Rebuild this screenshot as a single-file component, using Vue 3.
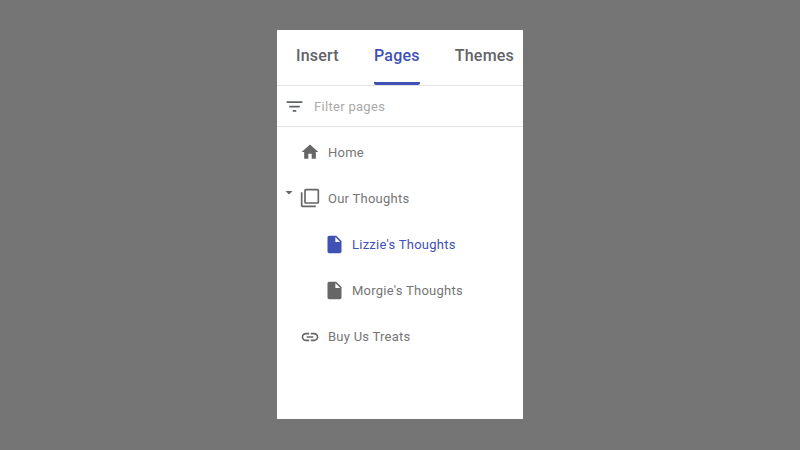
<script setup>
const tabs = [
  { label: 'Insert' },
  { label: 'Pages', active: true },
  { label: 'Themes' }
]

const icons = {
  home: 'M10 20v-6h4v6h5v-8h3L12 3 2 12h3v8z',
  stack:
    'M3 5H1v16c0 1.1.9 2 2 2h16v-2H3V5zm18-4H7c-1.1 0-2 .9-2 2v14c0 1.1.9 2 2 2h14c1.1 0 2-.9 2-2V3c0-1.1-.9-2-2-2zm0 16H7V3h14v14z',
  file: 'M6 2c-1.1 0-1.99.9-1.99 2L4 20c0 1.1.89 2 1.99 2H18c1.1 0 2-.9 2-2V8l-6-6H6zm7 7V3.5L18.5 9H13z',
  link: 'M3.9 12c0-1.71 1.39-3.1 3.1-3.1h4V7H7c-2.76 0-5 2.24-5 5s2.24 5 5 5h4v-1.9H7c-1.71 0-3.1-1.39-3.1-3.1zM8 13h8v-2H8v2zm9-6h-4v1.9h4c1.71 0 3.1 1.39 3.1 3.1s-1.39 3.1-3.1 3.1h-4V17h4c2.76 0 5-2.24 5-5s-2.24-5-5-5z'
}

const pages = [
  { label: 'Home', icon: 'home' },
  { label: 'Our Thoughts', icon: 'stack', open: true },
  { label: "Lizzie's Thoughts", icon: 'file', child: true, active: true },
  { label: "Morgie's Thoughts", icon: 'file', child: true },
  { label: 'Buy Us Treats', icon: 'link' }
]
</script>

<template>
  <main class="stage">
    <section class="panel">
      <nav class="tabs">
        <div v-for="tab in tabs" :key="tab.label" class="tab" :class="{ 'tab--active': tab.active }">
          {{ tab.label }}
        </div>
      </nav>

      <div class="filter">
        <svg class="filter__icon" viewBox="0 0 24 24">
          <path d="M10 18h4v-2h-4v2zM3 6v2h18V6H3zm3 7h12v-2H6v2z" />
        </svg>
        <span>Filter pages</span>
      </div>

      <ul class="tree">
        <li
          v-for="page in pages"
          :key="page.label"
          class="row"
          :class="{ 'row--child': page.child, 'row--active': page.active }"
        >
          <svg v-if="page.open" class="row__caret" viewBox="0 0 24 24">
            <path d="M5 8l7 7 7-7z" />
          </svg>
          <svg class="row__icon" viewBox="0 0 24 24">
            <path :d="icons[page.icon]" />
          </svg>
          <span>{{ page.label }}</span>
        </li>
      </ul>
    </section>
  </main>
</template>

<style>
html,
body {
  margin: 0;
  background: #757575;
}
</style>

<style scoped>
.stage {
  width: 800px;
  height: 450px;
  background: #757575;
  display: flex;
  justify-content: center;
  padding-top: 30px;
  box-sizing: border-box;
  font-family: Roboto, 'Liberation Sans', sans-serif;
}

.panel {
  width: 246px;
  height: 389px;
  background: #fff;
  overflow: hidden;
}

.tabs {
  height: 55px;
  display: flex;
  justify-content: space-between;
  padding: 0 9px 0 19px;
  border-bottom: 1px solid #e3e3e3;
}

.tab {
  height: 52px;
  line-height: 51px;
  font-size: 16px;
  font-weight: 500;
  letter-spacing: 0.2px;
  color: #5f6368;
  border-bottom: 3px solid transparent;
}

.tab--active {
  color: #3f51b5;
  border-bottom-color: #3f51b5;
  border-radius: 0 0 2px 2px;
}

.filter {
  height: 40px;
  display: flex;
  align-items: center;
  gap: 9px;
  padding-left: 7px;
  border-bottom: 1px solid #e3e3e3;
  font-size: 13px;
  letter-spacing: 0.3px;
  color: #aaa;
}

.filter__icon {
  width: 21px;
  height: 21px;
  fill: #5f6368;
}

.tree {
  list-style: none;
  margin: 0;
  padding: 2px 0 0;
}

.row {
  position: relative;
  height: 46.2px;
  display: flex;
  align-items: center;
  gap: 8px;
  padding-left: 23px;
  font-size: 13px;
  letter-spacing: 0.25px;
  color: #757575;
}

.row--child {
  padding-left: 47px;
  gap: 7px;
}

.row--active {
  color: #3f51b5;
}

.row__icon {
  width: 20px;
  height: 20px;
  fill: #666;
}

.row--child .row__icon {
  width: 21px;
  height: 21px;
}

.row--active .row__icon {
  fill: #3f51b5;
}

.row__caret {
  position: absolute;
  left: 6px;
  top: 12px;
  width: 12px;
  height: 12px;
  fill: #666;
}
</style>
